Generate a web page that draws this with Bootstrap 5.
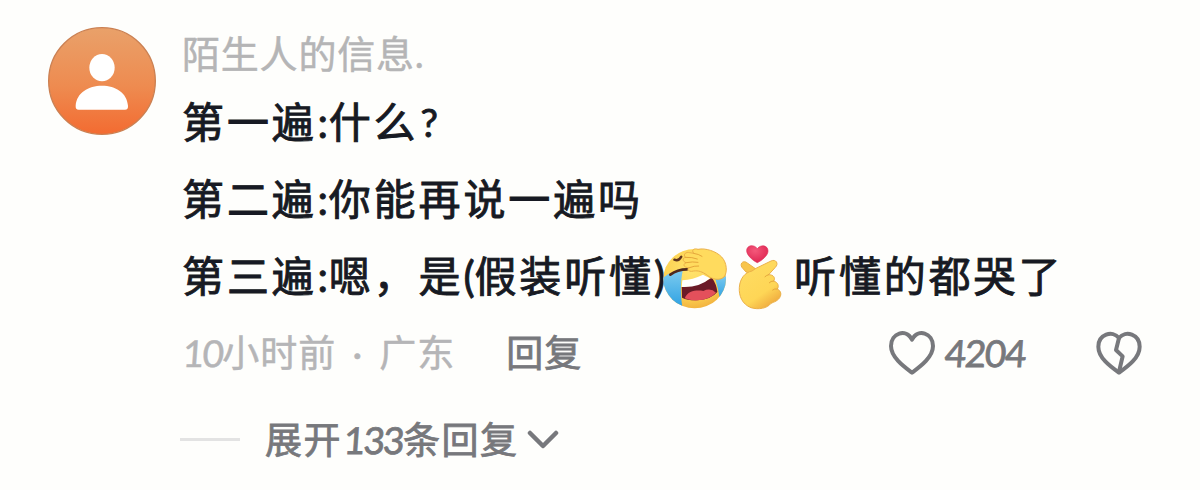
<!DOCTYPE html>
<html lang="zh-CN">
<head>
    <meta charset="UTF-8">
    <meta name="viewport" content="width=device-width, initial-scale=1.0">
    <title>评论</title>
    <link href="https://cdn.jsdelivr.net/npm/bootstrap@5.3.0/dist/css/bootstrap.min.css" rel="stylesheet">
    <style>
        body {
            background: #fefefc;
            font-family: Lato, "Noto Sans CJK SC", sans-serif;
            overflow: hidden;
        }
        svg { display: block; flex: none; }
        .comment { padding: 27px 58px 0 48px; }
        .comment-main { margin-left: 25px; }
        .user-name {
            height: 57px;
            line-height: 53px;
            padding-left: 1px;
            font-size: 38px;
            letter-spacing: .8px;
            color: #b5b5b6;
            -webkit-text-stroke: .5px #b5b5b6;
        }
        .comment-line {
            height: 77px;
            padding-left: 1px;
            font-size: 42px;
            letter-spacing: 2.9px;
            line-height: 77px;
            color: #171a23;
            -webkit-text-stroke: .9px #171a23;
            white-space: nowrap;
        }
        .colon { width: 12px; text-align: center; letter-spacing: 0; }
        .paren { width: 11px; letter-spacing: 0; }
        .question { padding-left: 2px; font-size: 39px; }
        .laugh { margin-left: -2px; }
        .finger-heart { margin: 0 12px 0 10px; }
        .meta {
            height: 76px;
            font-size: 37px;
            letter-spacing: 1px;
            color: #b5b5b7;
            -webkit-text-stroke: .5px #b5b5b7;
        }
        .num { padding-left: 2px; font-size: 37px; letter-spacing: -1.8px; transform: skewX(-4deg); }
        .dot { width: 43px; text-align: center; }
        .reply { margin-left: 51px; }
        .reply, .likes, .expand { color: #77787c; -webkit-text-stroke: .8px #77787c; }
        .likes { margin-left: 8px; letter-spacing: -1.4px; }
        .dislike { margin-left: 71px; }
        .expand {
            height: 97px;
            font-size: 37px;
            letter-spacing: 1.5px;
        }
        .expand-line { width: 60px; height: 3px; margin-left: -1px; margin-right: 25px; background: #e3e3e3; }
        .chevron { margin-left: 9px; }
    </style>
</head>
<body>
    <div class="comment d-flex align-items-start">
        <!-- Avatar -->
        <svg width="108" height="108" viewBox="24 21 324 324">
            <defs>
                <linearGradient id="avatarBg" x2="0" y2="1">
                    <stop stop-color="#e9a16a"/>
                    <stop offset=".55" stop-color="#ee8b50"/>
                    <stop offset="1" stop-color="#f36b31"/>
                </linearGradient>
            </defs>
            <circle cx="186" cy="183" r="160" fill="url(#avatarBg)" stroke="#cb8052" stroke-width="4"/>
            <ellipse cx="186" cy="143" rx="38" ry="41" fill="#fff"/>
            <path d="M116 269Q106 269 107 257C110 218 145 197 186 197S261 218 264 257Q265 269 255 269Z" fill="#fff"/>
        </svg>

        <div class="comment-main flex-grow-1">
            <div class="user-name">陌生人的信息.</div>

            <!-- Commentaire -->
            <div class="comment-line d-flex align-items-center">第一遍<span class="colon">:</span>什么<span class="question">?</span></div>
            <div class="comment-line d-flex align-items-center">第二遍<span class="colon">:</span>你能再说一遍吗</div>
            <div class="comment-line d-flex align-items-center">第三遍<span class="colon">:</span>嗯，是<span class="paren">(</span>假装听懂<span class="paren">)</span>
                <svg class="laugh" width="64" height="66" viewBox="27 27 192 198">
                    <defs>
                        <radialGradient id="skin" cx=".45" cy=".35" r=".7">
                            <stop stop-color="#ffe36d"/>
                            <stop offset=".65" stop-color="#fdd252"/>
                            <stop offset="1" stop-color="#f0ad3c"/>
                        </radialGradient>
                        <linearGradient id="tear" x2="0" y2="1">
                            <stop stop-color="#7ccbef"/>
                            <stop offset="1" stop-color="#2a9fe2"/>
                        </linearGradient>
                        <clipPath id="faceClip"><ellipse cx="122" cy="131" rx="94" ry="89"/></clipPath>
                    </defs>
                    <ellipse cx="122" cy="131" rx="94" ry="89" fill="url(#skin)"/>
                    <g clip-path="url(#faceClip)">
                        <path d="M43 117Q67 106 86 108C80 137 78 174 86 222L50 210L24 168V130Z" fill="url(#tear)"/>
                        <path d="M184 132Q202 134 220 120V176L198 196Q193 160 184 132Z" fill="url(#tear)"/>
                    </g>
                    <path d="M83 156Q135 152 174 128Q188 148 190 171Q170 194 130 196Q102 197 84 188Z" fill="#6b1b28"/>
                    <path d="M92 190C102 166 129 165 148 168Q170 157 186 173Q166 194 130 196Q106 197 92 190Z" fill="#e4505b"/>
                    <path d="M85 136Q116 134 147 119L168 130Q138 158 83 156Z" fill="#fff"/>
                    <path d="M49 119Q70 103 99 103" fill="none" stroke="#50291c" stroke-width="8" stroke-linecap="round"/>
                    <path d="M61 74Q74 80 82 65" fill="none" stroke="#60351d" stroke-width="7" stroke-linecap="round"/>
                    <path d="M94 67C86 57 97 50 107 53L119 55C111 44 121 39 132 43C154 38 187 49 203 66C219 83 221 112 210 126C196 138 174 133 160 121C145 110 133 106 119 108C106 112 96 104 106 98C91 99 84 89 96 83C85 79 85 69 94 67Z" fill="#ffdb5e" stroke="#ebb048" stroke-width="3"/>
                    <path d="M94 67Q115 66 130 72M96 83Q116 79 132 82M106 98Q121 92 134 93M119 55Q134 57 144 64" fill="none" stroke="#e5a63a" stroke-width="3" stroke-linecap="round"/>
                </svg>
                <svg class="finger-heart" width="45" height="66" viewBox="249 27 135 198">
                    <defs>
                        <linearGradient id="hand" x2=".6" y2="1">
                            <stop stop-color="#ffdd65"/>
                            <stop offset=".75" stop-color="#fed656"/>
                            <stop offset="1" stop-color="#f1b041"/>
                        </linearGradient>
                        <radialGradient id="love" cx=".4" cy=".3" r=".75">
                            <stop stop-color="#f4587a"/>
                            <stop offset="1" stop-color="#de2350"/>
                        </radialGradient>
                    </defs>
                    <path d="M310 83C297 77 278 61 278 47C278 30 300 27 310 41C321 27 342 31 342 48C342 62 323 77 310 83Z" fill="url(#love)" stroke="#de2f58" stroke-width="2"/>
                    <path d="M276 111L263 96C257 83 270 75 280 84L307 103L300 118Z" fill="#f8c54b" stroke="#ebb048" stroke-width="3"/>
                    <path d="M304 101L351 78C366 71 375 86 364 97L344 119C359 119 365 129 359 138C372 142 376 153 370 162C378 166 383 174 379 184C374 197 360 201 351 205C340 220 314 225 291 218C265 208 254 183 256 157C258 130 273 112 294 108Z" fill="url(#hand)" stroke="#ebb048" stroke-width="3"/>
                    <path d="M344 119Q337 121 333 125M359 138Q350 138 346 143M370 162Q361 160 356 165" fill="none" stroke="#e5a63a" stroke-width="3" stroke-linecap="round"/>
                </svg>听懂的都哭了</div>

            <!-- Date, lieu et actions -->
            <div class="meta d-flex align-items-center">
                <span class="num">10</span>小时前<span class="dot">·</span>广东
                <span class="reply">回复</span>
                <svg class="ms-auto" width="46" height="44" viewBox="30 29 138 132">
                    <path d="M99 154C75 136 36 108 36 74C36 35 81 20 99 55C117 20 162 35 162 74C162 108 123 136 99 154Z" fill="none" stroke="#77787c" stroke-width="12" stroke-linejoin="round"/>
                </svg>
                <span class="likes num">4204</span>
                <svg class="dislike" width="46" height="44" viewBox="649 28 138 132">
                    <path d="M718 153C693 135 656 109 656 75C656 39 698 24 718 49C738 24 780 39 780 75C780 109 743 135 718 153Z" fill="none" stroke="#77787c" stroke-width="12" stroke-linejoin="round"/>
                    <path d="M718 49L709 85L729 104L718 150" fill="none" stroke="#77787c" stroke-width="12" stroke-linejoin="round"/>
                </svg>
            </div>

            <!-- Réponses -->
            <div class="expand d-flex align-items-center">
                <span class="expand-line"></span>展开<span class="num">133</span>条回复
                <svg class="chevron" width="32" height="20" viewBox="0 0 32 20">
                    <path d="M3 3L16 16L29 3" fill="none" stroke="#77787c" stroke-width="4.5" stroke-linecap="round" stroke-linejoin="round"/>
                </svg>
            </div>
        </div>
    </div>

    <script src="https://cdn.jsdelivr.net/npm/bootstrap@5.3.0/dist/js/bootstrap.bundle.min.js"></script>
</body>
</html>
